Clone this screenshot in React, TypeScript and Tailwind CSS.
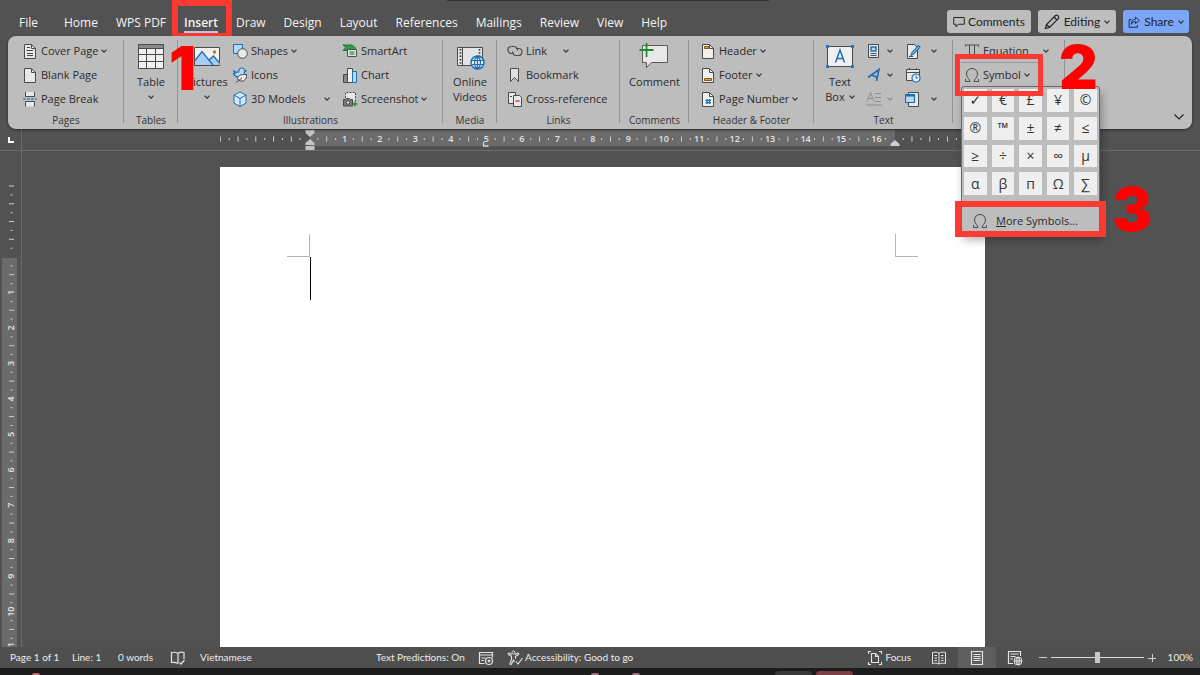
import React from "react";

type Children = { children?: React.ReactNode };

/* ---------- icons ---------- */

function Glyph({ children, size = "size-4" }: Children & { size?: string }) {
  return (
    <svg
      viewBox="0 0 16 16"
      className={`${size} shrink-0`}
      fill="none"
      stroke="#4a4a4a"
      strokeWidth="1"
      aria-hidden="true"
    >
      {children}
    </svg>
  );
}

function Chevron({ className = "text-[#333]" }: { className?: string }) {
  return (
    <svg viewBox="0 0 6 4" className={`h-1 w-1.5 shrink-0 ${className}`} fill="none" aria-hidden="true">
      <path d="M.5 .6 3 3.1 5.5 .6" stroke="currentColor" strokeWidth="1.2" />
    </svg>
  );
}

const sheet = "M2.5 1.5h7l4 4v10h-11z";
const fold = "M9.5 1.5v4h4";

const CoverPageIcon = () => (
  <Glyph>
    <path d={sheet} fill="#e8e8e8" />
    <path d={fold} />
    <path d="M5 4.5h3M4.5 7.5h4M5 10.5h6M5 12.5h6M8 7.5h3" strokeWidth="1.2" />
  </Glyph>
);

const BlankPageIcon = () => (
  <Glyph>
    <path d={sheet} fill="#e8e8e8" />
    <path d={fold} />
  </Glyph>
);

const PageBreakIcon = () => (
  <Glyph>
    <path d="M3.5 1v4.5h9V1M3.5 15.5v-5h9v5" fill="#e8e8e8" />
    <path d="M1 8h14" stroke="#1f6fb5" strokeDasharray="3 1" />
  </Glyph>
);

const TableIcon = () => (
  <svg viewBox="0 0 28 28" className="size-7" fill="none" stroke="#4a4a4a" aria-hidden="true">
    <path d="M1.500 2.500h25v24h-25z" fill="#f0f0f0" />
    <path d="M1.500 2.500h25v4h-25z" fill="#8a8a8a" />
    <path d="M1.500 12.500h25M1.500 19.500h25M9.500 6.500v20M18.500 6.500v20" />
  </svg>
);

const PicturesIcon = () => (
  <svg viewBox="0 0 28 28" className="size-7" fill="none" stroke="#4a4a4a" aria-hidden="true">
    <path d="M1.500 5.500h25v18h-25z" fill="#f0f0f0" />
    <path d="M2 19l7-9 7 8.500 4.500-4.500 6 6v3H2z" fill="#a9cdf0" stroke="none" />
    <path d="M2 18.500 9 9.500l11 13.500M16 18l4.500-4 6 7" stroke="#1f6fb5" strokeWidth="1.300" />
    <circle cx="21.500" cy="10" r="1.700" fill="#b8791b" stroke="none" />
  </svg>
);

const ShapesIcon = () => (
  <Glyph>
    <path d="M1.500 1.500h9v9h-9z" fill="#b9d8f3" stroke="#1f6fb5" />
    <circle cx="10.500" cy="10.500" r="4.800" fill="#e8e8e8" />
  </Glyph>
);

const IconsIcon = () => (
  <Glyph>
    <path
      d="M1.500 3.500c1 1.500 3 2 5.300 1.500C6.500 2.500 8 1 9.800 1c1.500 0 2.500.800 2.700 2l1.500.800-1.500.900c0 3.300-2 5.300-5.300 5.300-3 0-5-1.500-5.700-3.500l1.800-.200C2.300 5.500 1.700 4.700 1.500 3.500z"
      fill="#b9d8f3"
      stroke="#1f6fb5"
      strokeWidth="1.200"
    />
    <path d="M6 13c-1.500-4.500 3-6 8.500-5.500C15 12.500 11.500 16 6 13zM4 15.500l6-4.500" fill="#e8e8e8" />
  </Glyph>
);

const ModelsIcon = () => (
  <Glyph>
    <path d="M8 1l6 3v8l-6 3.500L2 12V4z" fill="#d5e8f8" stroke="#1f6fb5" />
    <path d="M2 4l6 3.500L14 4M8 7.500v8" stroke="#1f6fb5" />
  </Glyph>
);

const SmartArtIcon = () => (
  <Glyph>
    <path d="M1 2h9l4 3.500-3 2H1l3-3z" fill="#2f9a4c" stroke="#1c7436" />
    <path d="M5.500 6.500h9v7h-9z" fill="#d7e8da" stroke="#3c5b44" />
    <path d="M7.500 9h5M7.500 11h5" stroke="#3c5b44" />
  </Glyph>
);

const ChartIcon = () => (
  <Glyph>
    <path d="M1.500 7.500h4v8h-4z" fill="#8a8a8a" />
    <path d="M5.500 1.500h5v14h-5z" fill="#f0f0f0" />
    <path d="M10.500 4.500h4v11h-4z" fill="#b9d8f3" stroke="#1f6fb5" />
  </Glyph>
);

const ScreenshotIcon = () => (
  <Glyph>
    <path d="M3.500 7V1.500h10V10" fill="#e8e8e8" strokeDasharray="2 1.200" />
    <path d="M1.500 8.500h2l1-1h3l1 1h2v6.500h-9z" fill="#7a7a7a" />
    <circle cx="6" cy="11.500" r="1.800" fill="#d9d9d9" />
    <path d="M13 10.500v5M10.500 13h5" stroke="#1d8a35" strokeWidth="1.300" />
  </Glyph>
);

const VideoIcon = () => (
  <svg viewBox="0 0 30 28" className="h-7 w-[30px]" fill="none" stroke="#4a4a4a" aria-hidden="true">
    <path d="M2.500 5.500h25v18h-25z" fill="#e4e4e4" />
    <path d="M5.500 7v16M24.500 7v8" strokeWidth="1.600" strokeDasharray="1.500 1.800" stroke="#2b2b2b" />
    <path d="M7.500 5.500v18" />
    <circle cx="22.500" cy="20.500" r="6.500" fill="#e6f1fb" stroke="#1f6fb5" strokeWidth="1.500" />
    <path
      d="M16.500 18.500h12M16.500 22.500h12M22.500 14v13M22.500 14c-4 3-4 10 0 13c4-3 4-10 0-13"
      stroke="#1f6fb5"
      strokeWidth="1.200"
    />
  </svg>
);

const LinkIcon = () => (
  <Glyph>
    <path
      d="M7 10.500H4.500a3.500 3.500 0 010-7H7a3.500 3.500 0 013.400 4M9 5.500h2.500a3.500 3.500 0 010 7H9a3.500 3.500 0 01-3.400-4"
      strokeWidth="1.200"
    />
  </Glyph>
);

const BookmarkIcon = () => (
  <Glyph>
    <path d="M3.500 1.500h8v13l-4-4-4 4z" fill="#e0e0e0" />
  </Glyph>
);

const CrossReferenceIcon = () => (
  <Glyph>
    <path d="M1.500 1.500h7v11h-7z" fill="#e8e8e8" />
    <path d="M6.500 4.500h6l2 2v9h-8z" fill="#e8e8e8" />
    <path d="M3 5.500h2" />
    <path d="M8.500 10h4" stroke="#c43131" strokeWidth="1.300" />
  </Glyph>
);

const CommentIcon = () => (
  <svg viewBox="0 0 30 28" className="h-7 w-[30px]" fill="none" stroke="#5a5a5a" aria-hidden="true">
    <path d="M3.500 3.500h25v17h-16l-5 5v-5h-4z" fill="#e8e8e8" />
    <path d="M7.500 1v14M.500 8h14" stroke="#1d8a35" strokeWidth="1.800" />
  </svg>
);

const HeaderIcon = () => (
  <Glyph>
    <path d={sheet} fill="#f0f0f0" />
    <path d={fold} />
    <path d="M4.500 3.500h4v2h-4z" fill="#d9a43a" stroke="#8a5a0e" />
  </Glyph>
);

const FooterIcon = () => (
  <Glyph>
    <path d={sheet} fill="#f0f0f0" />
    <path d={fold} />
    <path d="M4.500 11.500h7v2h-7z" fill="#d9a43a" stroke="#8a5a0e" />
  </Glyph>
);

const PageNumberIcon = () => (
  <Glyph>
    <path d={sheet} fill="#f0f0f0" />
    <path d={fold} />
    <path d="M7 8v5M9.500 8v5M5.500 9.300h5.500M5.500 11.700h5.500" stroke="#1f6fb5" strokeWidth="1.200" />
  </Glyph>
);

const TextBoxIcon = () => (
  <svg viewBox="0 0 30 28" className="h-7 w-[30px]" fill="none" stroke="#4a4a4a" aria-hidden="true">
    <path d="M2.500 4.500h25v20h-25z" fill="#f0f0f0" />
    <path d="M1.500 3.500h2v2h-2zM26.500 3.500h2v2h-2zM1.500 23.500h2v2h-2zM26.500 23.500h2v2h-2z" fill="#1f6fb5" stroke="#1f6fb5" />
    <path d="M10.500 20.500 15 8l4.500 12.500M12 16.500h6" stroke="#1f6fb5" strokeWidth="1.500" />
  </svg>
);

const QuickPartsIcon = () => (
  <Glyph>
    <path d="M2.500 1.500h10v13h-10z" fill="#e8e8e8" />
    <path d="M5 4h5v4H5z" fill="#b9d8f3" stroke="#1f6fb5" strokeWidth="1.400" />
    <path d="M4.500 10.500h6M4.500 12.500h6" />
  </Glyph>
);

const WordArtIcon = () => (
  <Glyph>
    <path d="M2 10.500 13 2.500l-2.500 11.500M5.500 8l6 2.500" stroke="#1f6fb5" strokeWidth="1.700" />
  </Glyph>
);

const DropCapIcon = () => (
  <Glyph>
    <path d="M1 10.500 4.500 1.500 8 10.500M2.200 7.500h4.600M9 2.500h6M9 6.500h6M9 10.500h6M0 14h16" stroke="#8d8d8d" />
  </Glyph>
);

const SignatureIcon = () => (
  <Glyph>
    <path d="M2.500 1.500h7l3 3v11h-10z" fill="#e8e8e8" />
    <path d="M6 12.500 7 9.500l6.500-7 1.500 1.500-6.500 7z" fill="#b9d8f3" stroke="#1f6fb5" strokeWidth="1.200" />
    <path d="M4 13.500h4" />
  </Glyph>
);

const DateTimeIcon = () => (
  <Glyph>
    <path d="M1.500 2.500h13v11h-13z" fill="#e8e8e8" />
    <path d="M1.500 5.500h13M4.500 1v2M11.500 1v2" />
    <circle cx="11" cy="11" r="4" fill="#e6f1fb" stroke="#1f6fb5" strokeWidth="1.200" />
    <path d="M11 8.500V11h2" stroke="#1f6fb5" />
  </Glyph>
);

const ObjectIcon = () => (
  <Glyph>
    <path d="M3.500 1.500h10v14h-10z" fill="#e8e8e8" />
    <path d="M.500 3.500h9v8h-9z" fill="#b9d8f3" stroke="#1f6fb5" strokeWidth="1.200" />
    <path d="M.500 4.500h9" stroke="#1f6fb5" strokeWidth="2" />
  </Glyph>
);

const EquationIcon = () => (
  <Glyph>
    <path d="M1 2h14M1.500 2v1.500M14.500 2v1.500M5.500 2v12M10.500 2v12M3.500 14h4M8.500 14h4" />
  </Glyph>
);

const OmegaIcon = () => (
  <Glyph>
    <path d="M1.500 12v2.500H6c.3-2-3.500-3.500-3.500-7.500C2.500 3.700 4.800 1.500 8 1.500S13.500 3.700 13.500 7c0 4-3.800 5.500-3.500 7.500h4.500V12" />
  </Glyph>
);

const PencilIcon = () => (
  <Glyph>
    <path d="M1.500 14.500l1-4 9-9c2-1 4 1 3 3l-9 9zM10 3l3 3M2.500 10.500l3 3" stroke="#222" strokeWidth="1.200" />
  </Glyph>
);

const BubbleIcon = () => (
  <Glyph size="size-3">
    <path d="M1 2h14v9H7l-3 3.500V11H1z" stroke="#222" strokeWidth="1.300" />
  </Glyph>
);

const ShareIcon = () => (
  <Glyph size="size-3">
    <path
      d="M5 5H1.500v10h11v-3M10 1.500l5 4.500-5 4V7.500C7 7.500 5.500 8.500 4.500 11 4.500 7 6.500 4.500 10 4.200z"
      stroke="#1b2a4a"
      strokeWidth="1.300"
    />
  </Glyph>
);

/* ---------- ribbon parts ---------- */

function Item({
  icon,
  label,
  menu,
}: {
  icon: React.ReactNode;
  label: string;
  menu?: "near" | "far";
}) {
  return (
    <button type="button" className="flex h-6 w-full items-center gap-[3px] whitespace-nowrap">
      {icon}
      <span>{label}</span>
      {menu === "near" && <Chevron />}
      {menu === "far" && (
        <span className="ml-auto">
          <Chevron />
        </span>
      )}
    </button>
  );
}

function BigItem({ icon, children }: Children & { icon: React.ReactNode }) {
  return (
    <button type="button" className="flex flex-col items-center pt-[3px] leading-[15px]">
      <span className="flex h-8 items-start">{icon}</span>
      {children}
    </button>
  );
}

function Arrow() {
  return (
    <span className="flex h-[15px] items-center">
      <Chevron />
    </span>
  );
}

function IconItem({
  icon,
  label,
  arrow = "text-[#333]",
  gap = "gap-[5px]",
}: {
  icon: React.ReactNode;
  label: string;
  arrow?: string;
  gap?: string;
}) {
  return (
    <button type="button" aria-label={label} className={`flex h-6 items-center ${gap}`}>
      {icon}
      {arrow && <Chevron className={arrow} />}
    </button>
  );
}

function Group({ title, width, children }: Children & { title?: string; width: string }) {
  return (
    <section className={`relative flex shrink-0 flex-col pt-[3px] ${width}`}>
      <span className="absolute top-1 right-0 bottom-1.5 w-px bg-[#939393]" />
      <div className="flex h-[73px]">{children}</div>
      {title && <h2 className="text-center text-[10px] leading-4 text-[#333]">{title}</h2>}
    </section>
  );
}

function Step({ className, children }: Children & { className: string }) {
  return (
    <b
      className={`pointer-events-none absolute z-20 font-['Inter',sans-serif] text-[60px] leading-[60px] font-black text-[#ff0000] ${className}`}
    >
      {children}
    </b>
  );
}

/* ---------- symbol menu ---------- */

const symbols = [
  "✓", "€", "£", "¥", "©",
  "®", "™", "±", "≠", "≤",
  "≥", "÷", "×", "∞", "µ",
  "α", "β", "п", "Ω", "∑",
];

function SymbolMenu() {
  return (
    <div className="absolute top-[23px] left-0 w-[139px] rounded-[3px] border border-[#6a6a6a] bg-[#bdbdbd] shadow-[2px_6px_8px_rgba(0,0,0,0.3)]">
      <div className="grid h-[110px] grid-cols-5 gap-[5px] px-[2px] pt-[2px] pb-[2px]">
        {symbols.map((s) => (
          <button
            key={s}
            type="button"
            className="flex items-center justify-center bg-[#efefef] font-['Open_Sans','DejaVu_Sans',sans-serif] text-[14px] leading-none text-[#333]"
          >
            {s}
          </button>
        ))}
      </div>
      <div className="relative mt-[8px]">
        <button type="button" className="flex h-[28px] w-full items-center gap-2 pt-1 pl-[10px] text-[11px]">
          <OmegaIcon />
          <span>
            <u>M</u>ore Symbols...
          </span>
        </button>
        <span className="pointer-events-none absolute -top-1 -right-[7px] -bottom-1 -left-[7px] border-[6px] border-[#fb3b32]" />
        <Step className="-top-[26px] left-[150px]">3</Step>
      </div>
    </div>
  );
}

/* ---------- rulers ---------- */

const CM = 35.47;

function marks(from: number, to: number) {
  const list: number[] = [];
  for (let q = from; q <= to; q++) list.push(q);
  return list;
}

function HorizontalRuler() {
  return (
    <svg
      viewBox="0 0 765 21"
      className="h-[21px] w-[765px] shrink-0 font-['Open_Sans',sans-serif] text-[9px] font-semibold"
      fill="#e4e4e4"
      aria-hidden="true"
    >
      <path d="M90 1h585v16H90z" fill="#6b6b6b" />
      {marks(-10, 76).map((q) => {
        const x = 89 + (q * CM) / 4;
        if (q === 0 || q === 66) return null;
        if (q > 0 && q < 66 && q % 4 === 0)
          return (
            <text key={q} x={x} y="13" textAnchor="middle">
              {q / 4}
            </text>
          );
        const h = q % 2 === 0 ? 5 : 2;
        return <rect key={q} x={x - 0.5} y={10 - h / 2} width="1" height={h} fill="#cfcfcf" />;
      })}
      <path d="M85.500 1h9v3l-4.500 4-4.500-4zM85.500 16v-2l4.500-4 4.500 4v2zM85.500 17h9v4h-9z" fill="#c4c4c4" />
      <path d="M670.500 17v-2l4.500-4 4.500 4v2z" fill="#d0d0d0" />
      <path d="M263.500 13v4h5" fill="none" stroke="#d8d8d8" strokeWidth="1.300" />
    </svg>
  );
}

function VerticalRuler() {
  return (
    <svg
      viewBox="0 0 22 1000"
      className="h-[1000px] w-[22px] font-['Open_Sans',sans-serif] text-[9px] font-semibold"
      fill="#e4e4e4"
      aria-hidden="true"
    >
      <path d="M2 107h15v893H2z" fill="#6b6b6b" />
      {marks(-8, 44).map((q) => {
        const y = 106 + (q * CM) / 4;
        if (q === 0) return null;
        if (q > 0 && q % 4 === 0)
          return (
            <text key={q} transform={`translate(14 ${y}) rotate(-90)`} textAnchor="middle">
              {q / 4}
            </text>
          );
        const w = q % 2 === 0 ? 5 : 2;
        return <rect key={q} x={11.5 - w / 2} y={y - 0.5} width={w} height="1" fill="#cfcfcf" />;
      })}
    </svg>
  );
}

/* ---------- page ---------- */

const tabs = [
  "File", "Home", "WPS PDF", "Insert", "Draw", "Design",
  "Layout", "References", "Mailings", "Review", "View", "Help",
];

function TabBar() {
  return (
    <nav className="flex h-9 items-start pr-[11px] pl-[10px] font-['Open_Sans',sans-serif] text-[12px] text-[#f4f4f4]">
      {tabs.map((t) =>
        t === "Insert" ? (
          <div key={t} className="relative h-9">
            <button type="button" className="px-[9px] pt-[15px] leading-4 font-semibold whitespace-nowrap">
              <span className="block border-b-2 border-[#b9c6e8]">{t}</span>
            </button>
            <span className="pointer-events-none absolute top-0 -right-[5px] -left-[3px] z-10 h-[39px] border-[6px] border-[#fb3b32]" />
            <Step className="top-[38px] -left-[6px]">1</Step>
          </div>
        ) : (
          <button key={t} type="button" className="px-[9px] pt-[15px] leading-4 whitespace-nowrap first:mr-2">
            {t}
          </button>
        ),
      )}
      <div className="mt-[10px] ml-auto flex gap-[7px] font-['Lato',sans-serif] text-[#222]">
        <button type="button" className="flex h-[23px] w-[84px] items-center justify-center gap-[3px] rounded-[3px] bg-[#bdbdbd]">
          <BubbleIcon />
          Comments
        </button>
        <button type="button" className="flex h-[23px] w-[78px] items-center justify-center gap-1 rounded-[3px] bg-[#bdbdbd]">
          <PencilIcon />
          Editing
          <Chevron />
        </button>
        <button type="button" className="flex h-[23px] w-[66px] items-center justify-center gap-1 rounded-[3px] bg-[#7ba5f5]">
          <ShareIcon />
          Share
          <Chevron />
        </button>
      </div>
    </nav>
  );
}

function Ribbon() {
  return (
    <div className="relative z-10 mx-2 flex h-[93px] rounded-lg bg-[#bdbdbd] font-['Open_Sans',sans-serif] text-[11px] text-[#2b2b2b] shadow-[0_1px_3px_rgba(0,0,0,0.5)]">
      <Group title="Pages" width="w-[116px]">
        <div className="ml-[14px]">
          <Item icon={<CoverPageIcon />} label="Cover Page" menu="near" />
          <Item icon={<BlankPageIcon />} label="Blank Page" />
          <Item icon={<PageBreakIcon />} label="Page Break" />
        </div>
      </Group>
      <Group title="Tables" width="w-[54px]">
        <div className="flex w-full justify-center">
          <BigItem icon={<TableIcon />}>
            Table
            <Arrow />
          </BigItem>
        </div>
      </Group>
      <Group title="Illustrations" width="w-[265px]">
        <div className="ml-1 flex w-[50px] justify-center">
          <BigItem icon={<PicturesIcon />}>
            Pictures
            <Arrow />
          </BigItem>
        </div>
        <div className="w-[98px]">
          <Item icon={<ShapesIcon />} label="Shapes" menu="near" />
          <Item icon={<IconsIcon />} label="Icons" />
          <Item icon={<ModelsIcon />} label="3D Models" menu="far" />
        </div>
        <div className="ml-3">
          <Item icon={<SmartArtIcon />} label="SmartArt" />
          <Item icon={<ChartIcon />} label="Chart" />
          <Item icon={<ScreenshotIcon />} label="Screenshot" menu="near" />
        </div>
      </Group>
      <Group title="Media" width="w-[54px]">
        <div className="flex w-full justify-center">
          <BigItem icon={<VideoIcon />}>
            <span>Online</span>
            <span>Videos</span>
          </BigItem>
        </div>
      </Group>
      <Group title="Links" width="w-[123px]">
        <div className="ml-[10px]">
          <div className="w-[62px]">
            <Item icon={<LinkIcon />} label="Link" menu="far" />
          </div>
          <Item icon={<BookmarkIcon />} label="Bookmark" />
          <Item icon={<CrossReferenceIcon />} label="Cross-reference" />
        </div>
      </Group>
      <Group title="Comments" width="w-[69px]">
        <div className="flex w-full justify-center">
          <BigItem icon={<CommentIcon />}>Comment</BigItem>
        </div>
      </Group>
      <Group title="Header & Footer" width="w-[125px]">
        <div className="ml-[11px]">
          <Item icon={<HeaderIcon />} label="Header" menu="near" />
          <Item icon={<FooterIcon />} label="Footer" menu="near" />
          <Item icon={<PageNumberIcon />} label="Page Number" menu="near" />
        </div>
      </Group>
      <Group title="Text" width="w-[139px]">
        <div className="ml-1 flex w-[44px] justify-center">
          <BigItem icon={<TextBoxIcon />}>
            <span>Text</span>
            <span className="flex items-center gap-1">
              Box
              <Chevron />
            </span>
          </BigItem>
        </div>
        <div className="ml-1">
          <IconItem icon={<QuickPartsIcon />} label="Quick Parts" />
          <IconItem icon={<WordArtIcon />} label="WordArt" />
          <IconItem icon={<DropCapIcon />} label="Drop Cap" arrow="text-[#8d8d8d]" />
        </div>
        <div className="ml-3">
          <IconItem icon={<SignatureIcon />} label="Signature Line" gap="gap-[10px]" />
          <IconItem icon={<DateTimeIcon />} label="Date and Time" arrow="" />
          <IconItem icon={<ObjectIcon />} label="Object" gap="gap-[10px]" />
        </div>
      </Group>
      <Group width="w-[112px]">
        <div className="ml-2">
          <div className="w-[88px] pl-[3px]">
            <Item icon={<EquationIcon />} label="Equation" menu="far" />
          </div>
          <div className="relative -mt-px w-[78px] border-t border-[#999] pl-[3px]">
            <Item icon={<OmegaIcon />} label="Symbol" menu="near" />
            <SymbolMenu />
            <span className="pointer-events-none absolute -top-[9px] -left-[6px] h-[42px] w-[88px] border-[5px] border-[#fb3b32]" />
            <Step className="-top-[26px] left-[98px]">2</Step>
          </div>
        </div>
      </Group>
      <button type="button" aria-label="Collapse the ribbon" className="mt-auto mr-2 mb-2 ml-auto">
        <svg viewBox="0 0 10 8" className="h-2 w-2.5" fill="none" stroke="#222" aria-hidden="true">
          <path d="M.5 1.500 5 6l4.500-4.500" strokeWidth="1.200" />
        </svg>
      </button>
    </div>
  );
}

function Sheet() {
  return (
    <article className="flex w-[765px] flex-col bg-white pt-[67px]">
      <div className="flex justify-between px-[67px]">
        <span className="h-[23px] w-[23px] border-r border-b border-[#b5b5b5]" />
        <span className="h-[23px] w-[23px] border-b border-l border-[#b5b5b5]" />
      </div>
      <span className="ml-[90px] h-[43px] w-px bg-black" />
    </article>
  );
}

function StatusBar() {
  return (
    <footer className="flex h-[21px] shrink-0 items-center bg-[#4f4f4f] pr-[7px] pl-[10px] text-[10px] whitespace-nowrap text-[#ececec]">
      <button type="button" className="w-[62px] text-left">Page 1 of 1</button>
      <button type="button" className="w-[46px] text-left">Line: 1</button>
      <button type="button" className="w-[52px] text-left">0 words</button>
      <button type="button" aria-label="Proofing" className="w-[30px]">
        <svg viewBox="0 0 16 16" className="size-4" fill="none" stroke="#e4e4e4" aria-hidden="true">
          <path d="M8 3.500v10M8 3.500C6.500 2.300 4 2 1.500 2.500v10c2.500-.300 4.500 0 6.500 1M8 3.500c1.500-1.200 4-1.500 6-1V9M9.500 12.500l1.500 1.500 3.500-4" strokeWidth="1.200" />
        </svg>
      </button>
      <button type="button" className="w-[176px] text-left">Vietnamese</button>
      <button type="button" className="w-[102px] text-left">Text Predictions: On</button>
      <button type="button" aria-label="Macro recording" className="w-[29px]">
        <svg viewBox="0 0 16 16" className="size-4" fill="none" stroke="#e4e4e4" aria-hidden="true">
          <path d="M6.500 13.500h-5v-11h13v5M1.500 5h13M3.500 8h4M3.500 10.500h2.500" strokeWidth="1.200" />
          <circle cx="11" cy="11" r="3.500" strokeWidth="1.200" />
          <circle cx="11" cy="11" r="1" fill="#e4e4e4" />
        </svg>
      </button>
      <button type="button" className="flex items-center gap-[2px]">
        <svg viewBox="0 0 16 16" className="size-4" fill="none" stroke="#e4e4e4" aria-hidden="true">
          <circle cx="6.500" cy="2.500" r="1.500" />
          <path d="M5 4.500 2.500 3.200c-1-.400-1.700.900-.700 1.500L4.500 6.300v3L3 13.500c-.200 1 1.100 1.300 1.500.500L6.500 10l1 2M8 4.500l2.500-1.300c1-.400 1.700.900.700 1.500L8.500 6.300v2.500M9 11.500l2 2.500 4.500-6" strokeWidth="1.100" />
        </svg>
        Accessibility: Good to go
      </button>

      <div className="ml-auto flex h-full items-center">
        <button type="button" className="mr-[20px] flex items-center gap-[2px]">
          <svg viewBox="0 0 16 16" className="size-4" fill="none" stroke="#e4e4e4" aria-hidden="true">
            <path d="M4 1.500H1.500V4M12 1.500h2.500V4M4 14.500H1.500V12M12 14.500h2.500V12M4.500 3.500h4l3 3v6h-7zM8.500 3.500v3h3" strokeWidth="1.100" />
          </svg>
          Focus
        </button>
        <button type="button" aria-label="Read mode" className="flex h-full w-[27px] items-center">
          <svg viewBox="0 0 16 16" className="size-4" fill="none" stroke="#e4e4e4" aria-hidden="true">
            <path d="M8 3v11M8 3C6 2 4 2 1.500 2.500v11c2.500-.500 4.500-.500 6.500.500 2-1 4-1 6.500-.500v-11C12 2 10 2 8 3M3.500 5.500H6M3.500 8H6M3.500 10.500H6M10 5.500h2.500M10 8h2.500M10 10.500h2.500" />
          </svg>
        </button>
        <button type="button" aria-label="Print layout" className="flex h-full w-[38px] items-center justify-center bg-[#5e5e5e]">
          <svg viewBox="0 0 16 16" className="size-4" fill="none" stroke="#e4e4e4" aria-hidden="true">
            <path d="M2.500 1.500h11v13h-11zM4.500 4.500h7M4.500 6.500h7M4.500 8.500h7M4.500 10.500h7" strokeWidth="1.200" />
          </svg>
        </button>
        <button type="button" aria-label="Web layout" className="ml-[11px] w-[32px]">
          <svg viewBox="0 0 16 16" className="size-4" fill="none" stroke="#e4e4e4" aria-hidden="true">
            <path d="M6 13.500H1.500v-12h12V6M3.500 4h8M3.500 6.500h5M3.500 9H6" strokeWidth="1.200" />
            <circle cx="11" cy="11" r="4" fill="#4f4f4f" />
            <path d="M7 11h8M11 7v8M11 7c-2.500 2-2.500 6 0 8 2.500-2 2.500-6 0-8" />
          </svg>
        </button>
        <button type="button" aria-label="Zoom out" className="flex w-[8px] items-center">
          <span className="h-px w-full bg-[#d0d0d0]" />
        </button>
        <input
          type="range"
          min="0"
          max="100"
          defaultValue="50"
          aria-label="Zoom"
          className="mx-1 h-3 w-[93px] appearance-none bg-transparent [&::-webkit-slider-runnable-track]:h-px [&::-webkit-slider-runnable-track]:bg-[#d8d8d8] [&::-webkit-slider-thumb]:-mt-[5px] [&::-webkit-slider-thumb]:h-[11px] [&::-webkit-slider-thumb]:w-[5px] [&::-webkit-slider-thumb]:appearance-none [&::-webkit-slider-thumb]:bg-[#c8c8c8]"
        />
        <button type="button" aria-label="Zoom in" className="w-[8px]">
          <svg viewBox="0 0 8 8" className="size-2" stroke="#d0d0d0" aria-hidden="true">
            <path d="M0 4.500h8M4.500 0v8" />
          </svg>
        </button>
        <button type="button" className="w-[37px] text-right">100%</button>
      </div>
    </footer>
  );
}

/* top slivers of the desktop task bar's icons */
function TaskBar() {
  return (
    <div className="flex h-[7px] shrink-0 items-end bg-[#1c1c1c]">
      <span className="ml-8 h-[2px] w-2 rounded-t-full bg-[#c46a6a]" />
      <span className="ml-[551px] h-[2px] w-2 rounded-t-full bg-[#a06f80]" />
      <span className="ml-[33px] h-[2px] w-2 rounded-t-full bg-[#a06f80]" />
      <span className="ml-[135px] h-[4px] w-[37px] rounded-t-sm bg-[#383838]" />
      <span className="ml-1 h-[4px] w-[37px] rounded-t-sm bg-[#7b3f44]" />
    </div>
  );
}

export default function App() {
  return (
    <div className="relative flex h-screen flex-col overflow-hidden bg-[#525252] font-['Lato','Open_Sans',sans-serif]">
      <span className="absolute top-0 left-[447px] h-px w-[322px] bg-[#333]" />
      <header>
        <TabBar />
        <Ribbon />
      </header>

      <div className="flex h-[22px] shrink-0 border-b border-[#6a6a6a]">
        <div className="flex w-[22px] shrink-0 items-center justify-center border-r border-[#6a6a6a]">
          <span className="size-[6px] border-b-2 border-l-2 border-white" />
        </div>
        <div className="flex flex-1 justify-center pr-[17px]">
          <HorizontalRuler />
        </div>
      </div>

      <main className="flex min-h-0 flex-1">
        <div className="w-[22px] shrink-0 overflow-hidden border-r border-[#6a6a6a]">
          <VerticalRuler />
        </div>
        <div className="flex flex-1 justify-center pt-4 pr-[17px]">
          <Sheet />
        </div>
      </main>

      <StatusBar />
      <TaskBar />
    </div>
  );
}
